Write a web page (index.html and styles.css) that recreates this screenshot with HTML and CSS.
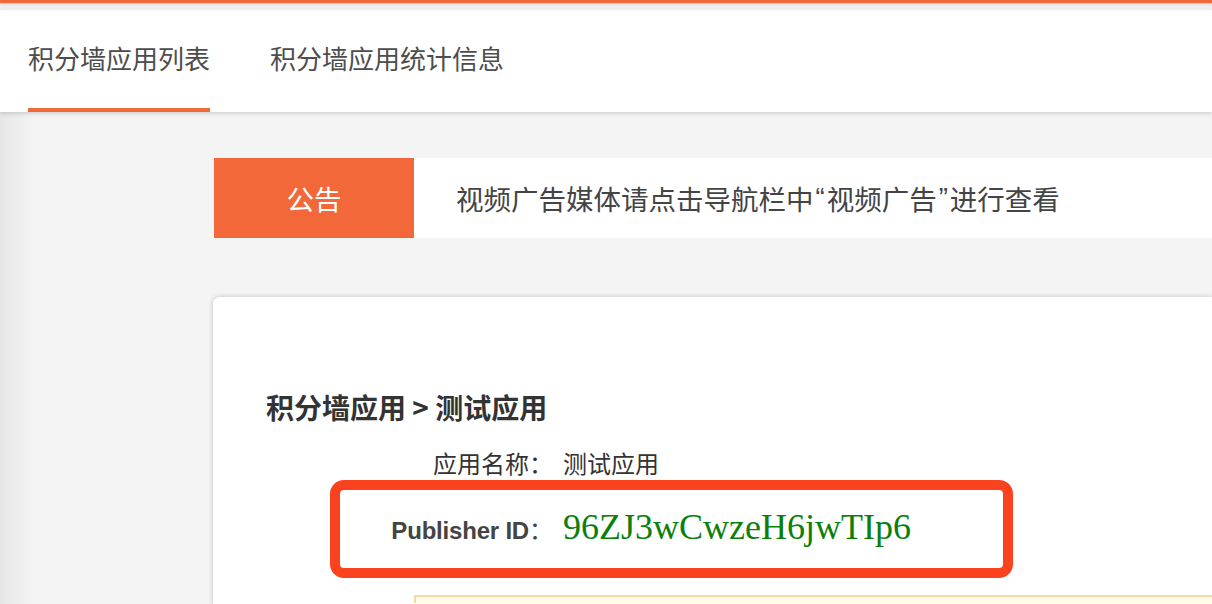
FILE: index.html
```html
<!DOCTYPE html>
<html lang="zh-CN">
<head>
<meta charset="utf-8">
<title>积分墙应用</title>
<link rel="stylesheet" href="styles.css">
</head>
<body>
<div class="topbar"></div>
<div class="topgap"></div>
<nav class="nav">
  <a class="tab active">积分墙应用列表</a>
  <a class="tab">积分墙应用统计信息</a>
</nav>
<main class="main">
  <section class="notice">
    <div class="notice-label">公告</div>
    <div class="notice-text">视频广告媒体请点击导航栏中<span class="q">“</span>视频广告<span class="q">”</span>进行查看</div>
  </section>
  <section class="card">
    <h2 class="crumb">积分墙应用 &gt; 测试应用</h2>
    <div class="info-row">
      <span class="label">应用名称：</span>
      <span class="value">测试应用</span>
    </div>
    <div class="info-row">
      <span class="label label-en">Publisher ID<span class="colon">：</span></span>
      <span class="value pid">96ZJ3wCwzeH6jwTIp6</span>
    </div>
    <div class="tip"></div>
    <div class="highlight"></div>
  </section>
</main>
</body>
</html>
```

FILE: styles.css
```css
html, body {
  margin: 0;
  padding: 0;
  overflow: hidden;
}
body {
  width: 1212px;
  height: 604px;
  background: linear-gradient(to right, #e7e7e7 0px, #f4f4f4 34px, #f4f4f4 100%);
  font-family: "Noto Sans CJK SC", "Liberation Sans", sans-serif;
  color: #333;
}
.topbar {
  height: 3px;
  background: #ef6a3b;
  box-shadow: 0 1px 2px rgba(239, 106, 59, 0.45);
  position: relative;
  z-index: 2;
}
.topgap {
  height: 7px;
  background: #efeff2;
}
.nav {
  height: 102px;
  background: #fff;
  display: flex;
  gap: 60px;
  padding-left: 28px;
  box-shadow: 0 2px 4px rgba(0, 0, 0, 0.14);
  position: relative;
  z-index: 1;
}
.tab {
  font-size: 26px;
  line-height: 26px;
  color: #4d4d4d;
  padding-top: 35px;
  box-sizing: border-box;
  height: 102px;
  border-bottom: 4px solid transparent;
}
.tab.active {
  border-bottom-color: #ef6a3b;
}
.main {
  padding-left: 214px;
  padding-top: 46px;
}
.notice {
  display: flex;
  height: 80px;
  background: #fff;
}
.notice-label {
  width: 200px;
  flex: none;
  background: #f26838;
  color: #fff;
  font-size: 27.5px;
  display: flex;
  align-items: center;
  justify-content: center;
}
.notice-text {
  padding-left: 42px;
  font-size: 27.5px;
  color: #444;
  display: flex;
  align-items: center;
  white-space: nowrap;
  overflow: hidden;
}
.q {
  font-family: "Liberation Sans", sans-serif;
  margin: 0 2px;
}
.card {
  position: relative;
  box-sizing: border-box;
  margin-top: 59px;
  margin-left: -1px;
  height: 307px;
  overflow: hidden;
  background: #fff;
  border-radius: 6px 0 0 0;
  box-shadow: 0 0 5px rgba(0, 0, 0, 0.22);
  padding: 96px 0 0 53px;
}
.crumb {
  margin: 0;
  font-size: 28px;
  line-height: 28px;
  font-weight: 700;
  color: #333;
}
.info-row {
  display: flex;
  align-items: baseline;
  height: 40px;
  line-height: 40px;
}
.info-row:first-of-type {
  margin-top: 22px;
}
.info-row + .info-row {
  margin-top: 24px;
}
.label {
  width: 287px;
  text-align: right;
  font-size: 24px;
  color: #333;
  flex: none;
}
.label-en {
  font-family: "Liberation Sans", "Noto Sans CJK SC", sans-serif;
  font-weight: 700;
  letter-spacing: -0.2px;
  color: #444;
}
.colon {
  font-family: "Noto Sans CJK SC", sans-serif;
  font-weight: 400;
  letter-spacing: 0;
}
.value {
  margin-left: 10px;
  font-size: 24px;
  color: #333;
  white-space: nowrap;
}
.pid {
  font-family: "Liberation Serif", serif;
  font-size: 36px;
  color: #0a800a;
}
.tip {
  margin-top: 48px;
  margin-left: 148px;
  height: 8px;
  box-sizing: border-box;
  background: #fffbe6;
  border: 2px solid #f3dca4;
  border-right: none;
  border-bottom: none;
}
.highlight {
  position: absolute;
  left: 117px;
  top: 183px;
  width: 683px;
  height: 98px;
  box-sizing: border-box;
  border: 10px solid #fa421e;
  border-radius: 14px;
}
```
